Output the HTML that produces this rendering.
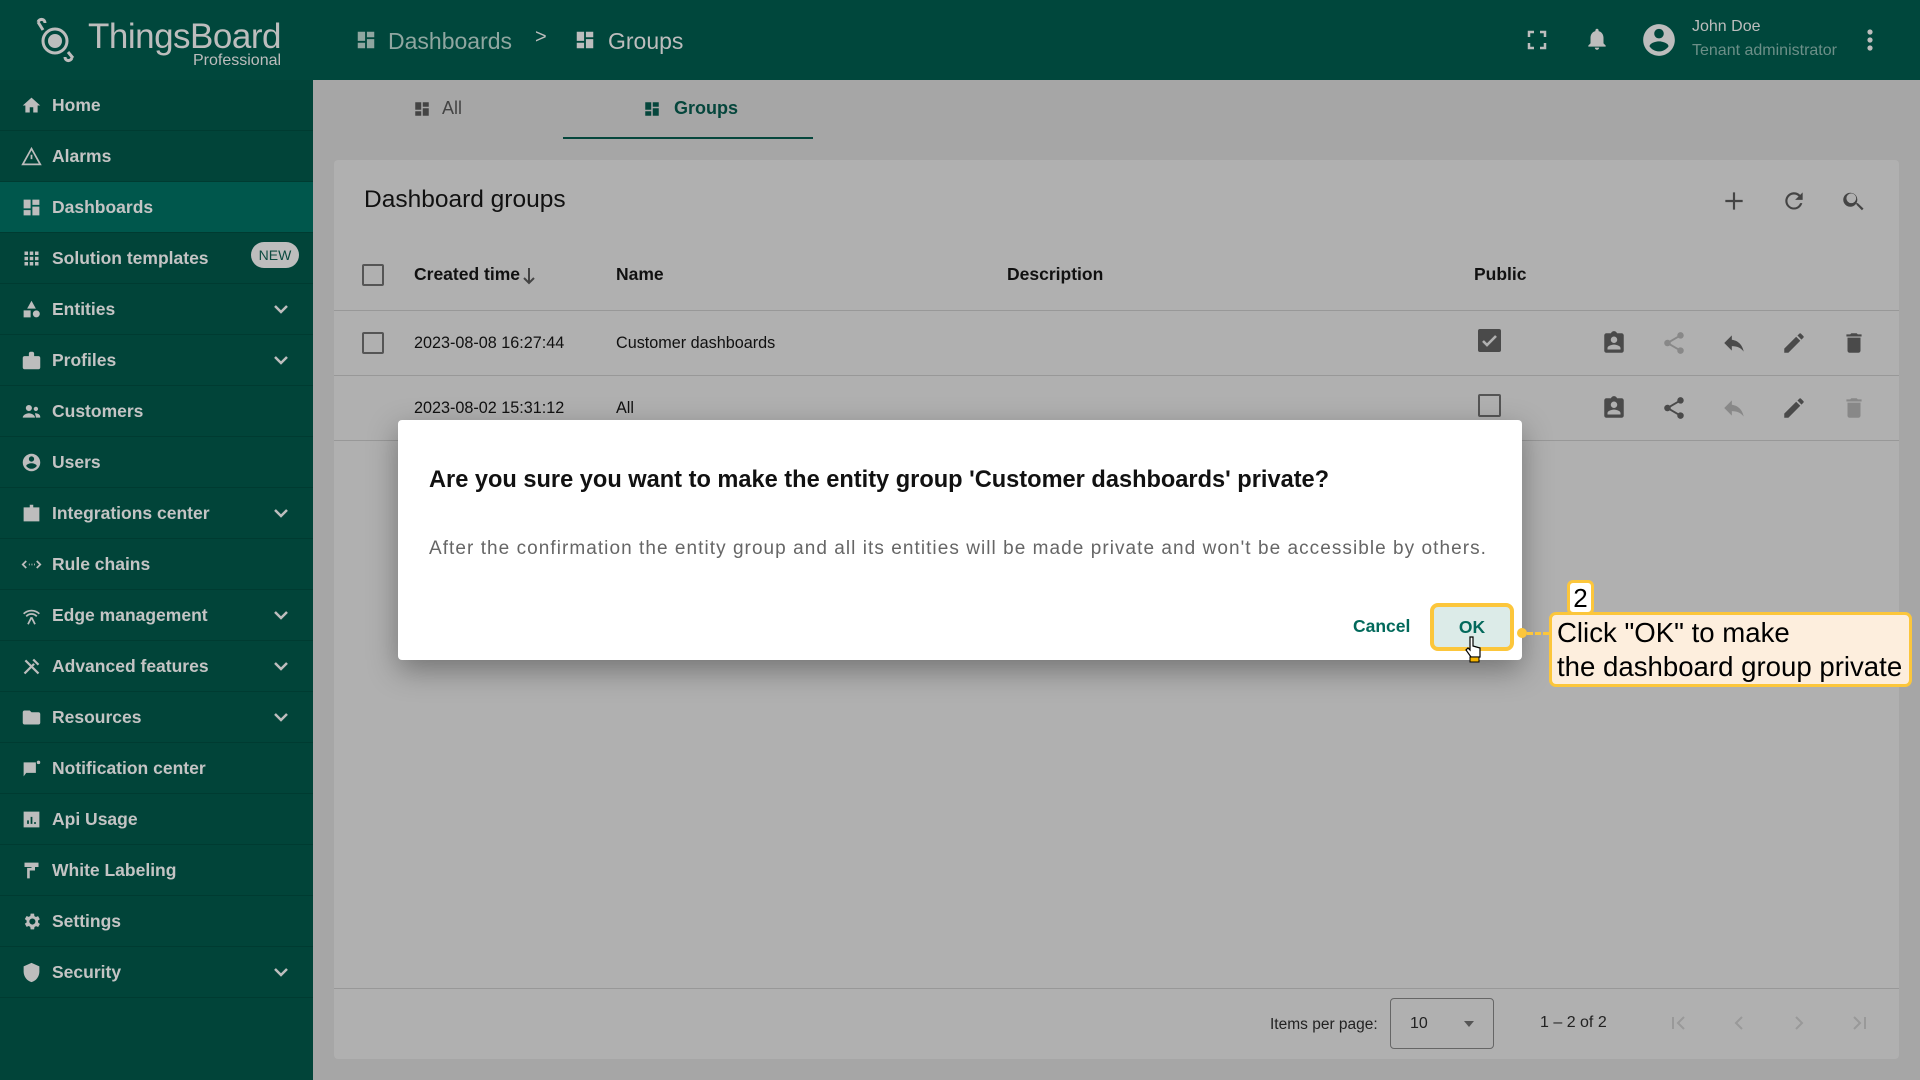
<!DOCTYPE html>
<html><head><meta charset="utf-8"><style>
*{box-sizing:border-box;margin:0;padding:0}
body{width:1920px;height:1080px;overflow:hidden;background:#a6a6a6;font-family:"Liberation Sans",Arial,sans-serif;position:relative}
.abs{position:absolute}
#top{left:0;top:0;width:1920px;height:80px;background:#00473c}
#side{left:0;top:80px;width:313px;height:1000px;background:#014439}
.nav{position:absolute;left:0;width:313px;height:51px;border-bottom:1px solid #003b31;color:#c4c4c4;font-size:17.5px;font-weight:bold;display:flex;align-items:center}
.nav svg{position:absolute;left:21px;width:21px;height:21px;fill:#bdbdbd}
.nav span{position:absolute;left:52px}
.nav .chev{position:absolute;left:271px;width:20px;height:20px;fill:none;stroke:#bdbdbd;stroke-width:2.5}
.sel{background:#00574c}
#card{left:334px;top:160px;width:1565px;height:899px;background:#b0b0b0;border-radius:4px}
.hdr{font-size:17.5px;font-weight:bold;color:#111}
.cell{font-size:16.2px;color:#111}
.cb{width:22px;height:22px;border:2.4px solid #555;border-radius:2px}
.line{height:1px;background:#989898}
.ic{position:absolute;width:26px;height:26px;fill:#4a4a4a}
.gray{fill:#888}
</style></head><body>
<div id="top" class="abs">
 <svg class="abs" style="left:28px;top:12px" width="56" height="56" viewBox="0 0 56 56"><g fill="none" stroke="#bdbdbd" stroke-width="3"><circle cx="27" cy="29" r="12"/><path d="M10 10c2-4 7-3 7 1M44 46c-2 4-7 3-7-1M15 18l-5-8M40 40l5 6"/></g><circle cx="27" cy="29" r="7" fill="#bdbdbd"/></svg>
 <div class="abs" style="left:88px;top:17px;font-size:35px;color:#bdbdbd;letter-spacing:-0.5px">ThingsBoard</div>
 <div class="abs" style="left:193px;top:52px;font-size:16px;color:#bdbdbd">Professional</div>
 <svg class="abs" style="left:355px;top:29px" width="22" height="22" viewBox="0 0 24 24" fill="#8fa6a0"><path d="M3 13h8V3H3zm0 8h8v-6H3zm10 0h8V11h-8zm0-18v6h8V3z"/></svg>
 <div class="abs" style="left:388px;top:28px;font-size:23px;color:#8fa6a0">Dashboards</div>
 <div class="abs" style="left:535px;top:26px;font-size:20px;color:#bdbdbd">&gt;</div>
 <svg class="abs" style="left:574px;top:29px" width="22" height="22" viewBox="0 0 24 24" fill="#bdbdbd"><path d="M3 13h8V3H3zm0 8h8v-6H3zm10 0h8V11h-8zm0-18v6h8V3z"/></svg>
 <div class="abs" style="left:608px;top:28px;font-size:23px;color:#bdbdbd">Groups</div>
 <svg class="abs" style="left:1525px;top:28px" width="24" height="24" viewBox="0 0 24 24" fill="none" stroke="#bdbdbd" stroke-width="2.5"><path d="M4 9V4h5M15 4h5v5M20 15v5h-5M9 20H4v-5"/></svg>
 <svg class="abs" style="left:1584px;top:26px" width="26" height="26" viewBox="0 0 24 24" fill="#bdbdbd"><path d="M12 22c1.1 0 2-.9 2-2h-4c0 1.1.9 2 2 2zm6-6v-5c0-3.1-1.6-5.6-4.5-6.3V4c0-.8-.7-1.5-1.5-1.5s-1.5.7-1.5 1.5v.7C7.6 5.4 6 7.9 6 11v5l-2 2v1h16v-1z"/></svg>
 <svg class="abs" style="left:1640px;top:21px" width="38" height="38" viewBox="0 0 24 24" fill="#bdbdbd"><path d="M12 2C6.5 2 2 6.5 2 12s4.5 10 10 10 10-4.5 10-10S17.5 2 12 2zm0 3c1.7 0 3 1.3 3 3s-1.3 3-3 3-3-1.3-3-3 1.3-3 3-3zm0 14.2c-2.5 0-4.7-1.3-6-3.2 0-2 4-3.1 6-3.1s6 1.1 6 3.1c-1.3 1.9-3.5 3.2-6 3.2z"/></svg>
 <div class="abs" style="left:1692px;top:18px;font-size:16px;color:#bdbdbd">John Doe</div>
 <div class="abs" style="left:1692px;top:42px;font-size:16px;color:#6c8f88">Tenant administrator</div>
 <svg class="abs" style="left:1860px;top:28px" width="20" height="24" viewBox="0 0 20 24" fill="#bdbdbd"><circle cx="10" cy="4" r="2.6"/><circle cx="10" cy="12" r="2.6"/><circle cx="10" cy="20" r="2.6"/></svg>
</div>
<div id="side" class="abs">
 <div class="nav" style="top:0"><svg viewBox="0 0 24 24"><path d="M10 20v-6h4v6h5v-8h3L12 3 2 12h3v8z"/></svg><span>Home</span></div>
 <div class="nav" style="top:51px"><svg viewBox="0 0 24 24" style="fill:none;stroke:#bdbdbd;stroke-width:2"><path d="M12 3L2 21h20z M12 10v5"/></svg><span>Alarms</span></div>
 <div class="nav sel" style="top:102px"><svg viewBox="0 0 24 24"><path d="M3 13h8V3H3zm0 8h8v-6H3zm10 0h8V11h-8zm0-18v6h8V3z"/></svg><span>Dashboards</span></div>
 <div class="nav" style="top:153px"><svg viewBox="0 0 24 24"><path d="M4 4h4v4H4zm6 0h4v4h-4zm6 0h4v4h-4zM4 10h4v4H4zm6 0h4v4h-4zm6 0h4v4h-4zM4 16h4v4H4zm6 0h4v4h-4zm6 0h4v4h-4z"/></svg><span>Solution templates</span><div class="abs" style="left:251px;top:9px;width:48px;height:26px;border-radius:13px;background:#bdbdbd;color:#0b4a3f;font-size:14px;font-weight:normal;text-align:center;line-height:26px">NEW</div></div>
 <div class="nav" style="top:204px"><svg viewBox="0 0 24 24"><path d="M12 2l-5 9h10zM3 13h8v8H3zm14.5 0a4 4 0 1 0 0 8 4 4 0 0 0 0-8z"/></svg><span>Entities</span><svg class="chev" viewBox="0 0 20 20"><path d="M4 7l6 6 6-6"/></svg></div>
 <div class="nav" style="top:255px"><svg viewBox="0 0 24 24"><path d="M20 7h-5V4c0-1.1-.9-2-2-2h-2c-1.1 0-2 .9-2 2v3H4c-1.1 0-2 .9-2 2v11c0 1.1.9 2 2 2h16c1.1 0 2-.9 2-2V9c0-1.1-.9-2-2-2z"/></svg><span>Profiles</span><svg class="chev" viewBox="0 0 20 20"><path d="M4 7l6 6 6-6"/></svg></div>
 <div class="nav" style="top:306px"><svg viewBox="0 0 24 24"><circle cx="9" cy="8" r="3.5"/><circle cx="17" cy="9" r="2.5"/><path d="M2 19c0-3 4-5 7-5s7 2 7 5zm14-5c3 0 6 1.5 6 4v1h-5c0-2-1-4-1-5z"/></svg><span>Customers</span></div>
 <div class="nav" style="top:357px"><svg viewBox="0 0 24 24"><path d="M12 2C6.5 2 2 6.5 2 12s4.5 10 10 10 10-4.5 10-10S17.5 2 12 2zm0 3c1.7 0 3 1.3 3 3s-1.3 3-3 3-3-1.3-3-3 1.3-3 3-3zm0 14.2c-2.5 0-4.7-1.3-6-3.2 0-2 4-3.1 6-3.1s6 1.1 6 3.1c-1.3 1.9-3.5 3.2-6 3.2z"/></svg><span>Users</span></div>
 <div class="nav" style="top:408px"><svg viewBox="0 0 24 24"><path d="M3 5h18v16H3zM10 2h4v3h-4z"/></svg><span>Integrations center</span><svg class="chev" viewBox="0 0 20 20"><path d="M4 7l6 6 6-6"/></svg></div>
 <div class="nav" style="top:459px"><svg viewBox="0 0 24 24" style="fill:none;stroke:#bdbdbd;stroke-width:2"><path d="M6 8l-4 4 4 4M18 8l4 4-4 4M9 12h1M12 12h1M15 12h1"/></svg><span>Rule chains</span></div>
 <div class="nav" style="top:510px"><svg viewBox="0 0 24 24" style="fill:none;stroke:#bdbdbd;stroke-width:2"><path d="M3 10a13 13 0 0 1 18 0M6 13a8 8 0 0 1 12 0M12 14l-4 8M12 14l4 8"/></svg><span>Edge management</span><svg class="chev" viewBox="0 0 20 20"><path d="M4 7l6 6 6-6"/></svg></div>
 <div class="nav" style="top:561px"><svg viewBox="0 0 24 24" style="fill:none;stroke:#bdbdbd;stroke-width:2.6"><path d="M4 20L15 9M20 20L8 8M5 5l4 4M14 4l6 6"/></svg><span>Advanced features</span><svg class="chev" viewBox="0 0 20 20"><path d="M4 7l6 6 6-6"/></svg></div>
 <div class="nav" style="top:612px"><svg viewBox="0 0 24 24"><path d="M10 4H4c-1.1 0-2 .9-2 2v12c0 1.1.9 2 2 2h16c1.1 0 2-.9 2-2V8c0-1.1-.9-2-2-2h-8z"/></svg><span>Resources</span><svg class="chev" viewBox="0 0 20 20"><path d="M4 7l6 6 6-6"/></svg></div>
 <div class="nav" style="top:663px"><svg viewBox="0 0 24 24"><path d="M3 5h14v12H6l-3 4zM20 3a2 2 0 1 1 0 4 2 2 0 0 1 0-4z"/></svg><span>Notification center</span></div>
 <div class="nav" style="top:714px"><svg viewBox="0 0 24 24"><path d="M3 3h18v18H3zm4 10v4h2v-4zm4-4v8h2V9zm4 6v2h2v-2z"/></svg><span>Api Usage</span></div>
 <div class="nav" style="top:765px"><svg viewBox="0 0 24 24"><path d="M4 3h16v5H4zM12 8h4v4h-6v9h-3v-12h5z"/></svg><span>White Labeling</span></div>
 <div class="nav" style="top:816px"><svg viewBox="0 0 24 24"><path d="M19.4 13c.1-.3.1-.7.1-1s0-.7-.1-1l2.1-1.6-2-3.5-2.5 1c-.5-.4-1.1-.7-1.7-1L15 3h-4l-.4 2.7c-.6.3-1.200.6-1.7 1l-2.5-1-2 3.5L6.5 11c0 .3-.1.7-.1 1s0 .7.1 1l-2.1 1.6 2 3.5 2.5-1c.5.4 1.1.7 1.7 1L11 21h4l.4-2.7c.6-.3 1.2-.6 1.7-1l2.5 1 2-3.5zM13 15.5a3.5 3.5 0 1 1 0-7 3.5 3.5 0 0 1 0 7z"/></svg><span>Settings</span></div>
 <div class="nav" style="top:867px"><svg viewBox="0 0 24 24"><path d="M12 1L3 5v6c0 5.5 3.8 10.7 9 12 5.2-1.3 9-6.5 9-12V5z"/></svg><span>Security</span><svg class="chev" viewBox="0 0 20 20"><path d="M4 7l6 6 6-6"/></svg></div>
</div>
<!-- tabs -->
<svg class="abs" style="left:413px;top:100px" width="18" height="18" viewBox="0 0 24 24" fill="#444"><path d="M3 13h8V3H3zm0 8h8v-6H3zm10 0h8V11h-8zm0-18v6h8V3z"/></svg>
<div class="abs" style="left:442px;top:98px;font-size:18px;color:#444">All</div>
<svg class="abs" style="left:643px;top:100px" width="18" height="18" viewBox="0 0 24 24" fill="#05463c"><path d="M3 13h8V3H3zm0 8h8v-6H3zm10 0h8V11h-8zm0-18v6h8V3z"/></svg>
<div class="abs" style="left:674px;top:98px;font-size:18px;color:#05463c;font-weight:bold">Groups</div>
<div class="abs" style="left:563px;top:137px;width:250px;height:2px;background:#05463c"></div>
<div id="card" class="abs"></div>
<div class="abs" style="left:364px;top:186px;font-size:24.5px;color:#111">Dashboard groups</div>
<svg class="abs" style="left:1721px;top:188px" width="26" height="26" viewBox="0 0 24 24" fill="none" stroke="#444" stroke-width="2"><path d="M12 4v16M4 12h16"/></svg>
<svg class="abs" style="left:1781px;top:188px" width="26" height="26" viewBox="0 0 24 24" fill="#444"><path d="M17.7 6.3A8 8 0 1 0 19.7 14h-2.1A6 6 0 1 1 12 6c1.7 0 3.1.7 4.2 1.8L13 11h7V4z"/></svg>
<svg class="abs" style="left:1841px;top:188px" width="26" height="26" viewBox="0 0 24 24" fill="#444"><path d="M15.5 14h-.8l-.3-.3A6.5 6.5 0 1 0 14 14.4l.3.3v.8l5 5 1.5-1.5zm-6 0a4.5 4.5 0 1 1 0-9 4.5 4.5 0 0 1 0 9z"/></svg>
<div class="cb abs" style="left:362px;top:264px"></div>
<div class="hdr abs" style="left:414px;top:264px">Created time</div>
<svg class="abs" style="left:521px;top:267px" width="16" height="18" viewBox="0 0 16 18" fill="none" stroke="#444" stroke-width="2"><path d="M8 1v15M3 11l5 5 5-5"/></svg>
<div class="hdr abs" style="left:616px;top:264px">Name</div>
<div class="hdr abs" style="left:1007px;top:264px">Description</div>
<div class="hdr abs" style="left:1474px;top:264px">Public</div>
<div class="line abs" style="left:334px;top:310px;width:1565px"></div>
<div class="cb abs" style="left:362px;top:332px"></div>
<div class="cell abs" style="left:414px;top:334px">2023-08-08 16:27:44</div>
<div class="cell abs" style="left:616px;top:334px">Customer dashboards</div>
<div class="abs" style="left:1478px;top:329px;width:23px;height:23px;background:#4a4a4a;border-radius:2px"><svg width="23" height="23" viewBox="0 0 23 23" fill="none" stroke="#b0b0b0" stroke-width="2.6"><path d="M5 12l4 4 9-9"/></svg></div>
<div class="line abs" style="left:334px;top:375px;width:1565px"></div>
<div class="cell abs" style="left:414px;top:399px">2023-08-02 15:31:12</div>
<div class="cell abs" style="left:616px;top:399px">All</div>
<div class="cb abs" style="left:1478px;top:394px;width:23px;height:23px"></div>
<div class="line abs" style="left:334px;top:440px;width:1565px"></div>
<!-- action icons -->
<svg class="ic" style="left:1601px;top:330px" viewBox="0 0 24 24"><path d="M19 3h-4.2C14.4 1.8 13.3 1 12 1s-2.4.8-2.8 2H5c-1.1 0-2 .9-2 2v14c0 1.1.9 2 2 2h14c1.1 0 2-.9 2-2V5c0-1.1-.9-2-2-2zm-7 3a3 3 0 1 1 0 6 3 3 0 0 1 0-6zm6 12H6v-1.4c0-2 4-3.1 6-3.1s6 1.1 6 3.1z"/></svg>
<svg class="ic gray" style="left:1661px;top:330px" viewBox="0 0 24 24"><path d="M18 16c-.8 0-1.5.3-2 .8L8.9 12.7c.1-.2.1-.5.1-.7s0-.5-.1-.7L16 7.2c.5.5 1.2.8 2 .8a3 3 0 1 0-3-3c0 .2 0 .5.1.7L8 9.8C7.5 9.3 6.8 9 6 9a3 3 0 1 0 2 5.2l7.1 4.1c-.1.2-.1.4-.1.7a3 3 0 1 0 3-3z"/></svg>
<svg class="ic" style="left:1721px;top:330px" viewBox="0 0 24 24"><path d="M10 9V5l-7 7 7 7v-4.1c5 0 8.5 1.6 11 5.1-1-5-4-10-11-11z"/></svg>
<svg class="ic" style="left:1781px;top:330px" viewBox="0 0 24 24"><path d="M3 17.2V21h3.8L17.8 9.9l-3.8-3.7zM20.7 7c.4-.4.4-1 0-1.4l-2.3-2.3c-.4-.4-1-.4-1.4 0l-1.8 1.8 3.7 3.8z"/></svg>
<svg class="ic" style="left:1841px;top:330px" viewBox="0 0 24 24"><path d="M6 19c0 1.1.9 2 2 2h8c1.1 0 2-.9 2-2V7H6zM19 4h-3.5l-1-1h-5l-1 1H5v2h14z"/></svg>
<svg class="ic" style="left:1601px;top:395px" viewBox="0 0 24 24"><path d="M19 3h-4.2C14.4 1.8 13.3 1 12 1s-2.4.8-2.8 2H5c-1.1 0-2 .9-2 2v14c0 1.1.9 2 2 2h14c1.1 0 2-.9 2-2V5c0-1.1-.9-2-2-2zm-7 3a3 3 0 1 1 0 6 3 3 0 0 1 0-6zm6 12H6v-1.4c0-2 4-3.1 6-3.1s6 1.1 6 3.1z"/></svg>
<svg class="ic" style="left:1661px;top:395px" viewBox="0 0 24 24"><path d="M18 16c-.8 0-1.5.3-2 .8L8.9 12.7c.1-.2.1-.5.1-.7s0-.5-.1-.7L16 7.2c.5.5 1.2.8 2 .8a3 3 0 1 0-3-3c0 .2 0 .5.1.7L8 9.8C7.5 9.3 6.8 9 6 9a3 3 0 1 0 2 5.2l7.1 4.1c-.1.2-.1.4-.1.7a3 3 0 1 0 3-3z"/></svg>
<svg class="ic gray" style="left:1721px;top:395px" viewBox="0 0 24 24"><path d="M10 9V5l-7 7 7 7v-4.1c5 0 8.5 1.6 11 5.1-1-5-4-10-11-11z"/></svg>
<svg class="ic" style="left:1781px;top:395px" viewBox="0 0 24 24"><path d="M3 17.2V21h3.8L17.8 9.9l-3.8-3.7zM20.7 7c.4-.4.4-1 0-1.4l-2.3-2.3c-.4-.4-1-.4-1.4 0l-1.8 1.8 3.7 3.8z"/></svg>
<svg class="ic gray" style="left:1841px;top:395px" viewBox="0 0 24 24"><path d="M6 19c0 1.1.9 2 2 2h8c1.1 0 2-.9 2-2V7H6zM19 4h-3.5l-1-1h-5l-1 1H5v2h14z"/></svg>
<!-- footer -->
<div class="line abs" style="left:334px;top:988px;width:1565px"></div>
<div class="abs" style="left:1270px;top:1016px;font-size:15.5px;color:#222">Items per page:</div>
<div class="abs" style="left:1390px;top:998px;width:104px;height:51px;border:1px solid #666;border-radius:4px"></div>
<div class="abs" style="left:1410px;top:1015px;font-size:16px;color:#222">10</div>
<svg class="abs" style="left:1462px;top:1019px" width="14" height="10" viewBox="0 0 14 10" fill="#555"><path d="M2 2h10L7 8z"/></svg>
<div class="abs" style="left:1540px;top:1014px;font-size:16px;color:#222">1 – 2 of 2</div>
<svg class="abs" style="left:1667px;top:1011px" width="24" height="24" viewBox="0 0 24 24" fill="none" stroke="#999" stroke-width="2"><path d="M6 6v12M17 6l-6 6 6 6"/></svg>
<svg class="abs" style="left:1727px;top:1011px" width="24" height="24" viewBox="0 0 24 24" fill="none" stroke="#999" stroke-width="2"><path d="M15 6l-6 6 6 6"/></svg>
<svg class="abs" style="left:1787px;top:1011px" width="24" height="24" viewBox="0 0 24 24" fill="none" stroke="#999" stroke-width="2"><path d="M9 6l6 6-6 6"/></svg>
<svg class="abs" style="left:1847px;top:1011px" width="24" height="24" viewBox="0 0 24 24" fill="none" stroke="#999" stroke-width="2"><path d="M7 6l6 6-6 6M18 6v12"/></svg>
<!-- dialog -->
<div class="abs" style="left:398px;top:420px;width:1124px;height:240px;background:#fff;border-radius:4px;box-shadow:0 10px 30px rgba(0,0,0,.35)"></div>
<div class="abs" style="left:429px;top:467px;font-size:23.6px;font-weight:bold;color:#111">Are you sure you want to make the entity group 'Customer dashboards' private?</div>
<div class="abs" style="left:429px;top:538px;font-size:19px;color:#666;letter-spacing:1.05px">After the confirmation the entity group and all its entities will be made private and won't be accessible by others.</div>
<div class="abs" style="left:1353px;top:616px;font-size:17.5px;font-weight:bold;color:#02695b">Cancel</div>
<div class="abs" style="left:1430px;top:603px;width:84px;height:48px;background:#dcebe8;border:4px solid #fcc63b;border-radius:8px;text-align:center;line-height:40px;font-size:17.5px;font-weight:bold;color:#02695b">OK</div>
<svg class="abs" style="left:1465px;top:635px" width="18" height="28" viewBox="0 0 18 28"><path d="M5 2v13l-2-2-2 2 5 7h9v-9l-7-2V2z" fill="#fff" stroke="#000" stroke-width="1.2"/><rect x="5" y="22" width="9" height="5" fill="#f6b400" stroke="#000"/></svg>
<!-- callout -->
<div class="abs" style="left:1517px;top:628px;width:10px;height:10px;border-radius:50%;background:#fcc63b"></div>
<div class="abs" style="left:1527px;top:632px;width:22px;border-top:3px dashed #fcc63b"></div>
<div class="abs" style="left:1567px;top:580px;width:27px;height:35px;background:#fff;border:3px solid #fcc63b;border-radius:6px;font-size:26px;text-align:center;line-height:30px;color:#000">2</div>
<div class="abs" style="left:1549px;top:612px;width:363px;height:75px;background:#fdeedd;border:3px solid #fcc63b;border-radius:7px;padding:1px 0 0 5px;font-size:27.6px;line-height:34px;color:#000;white-space:nowrap">Click "OK" to make<br>the dashboard group private</div>
</body></html>
